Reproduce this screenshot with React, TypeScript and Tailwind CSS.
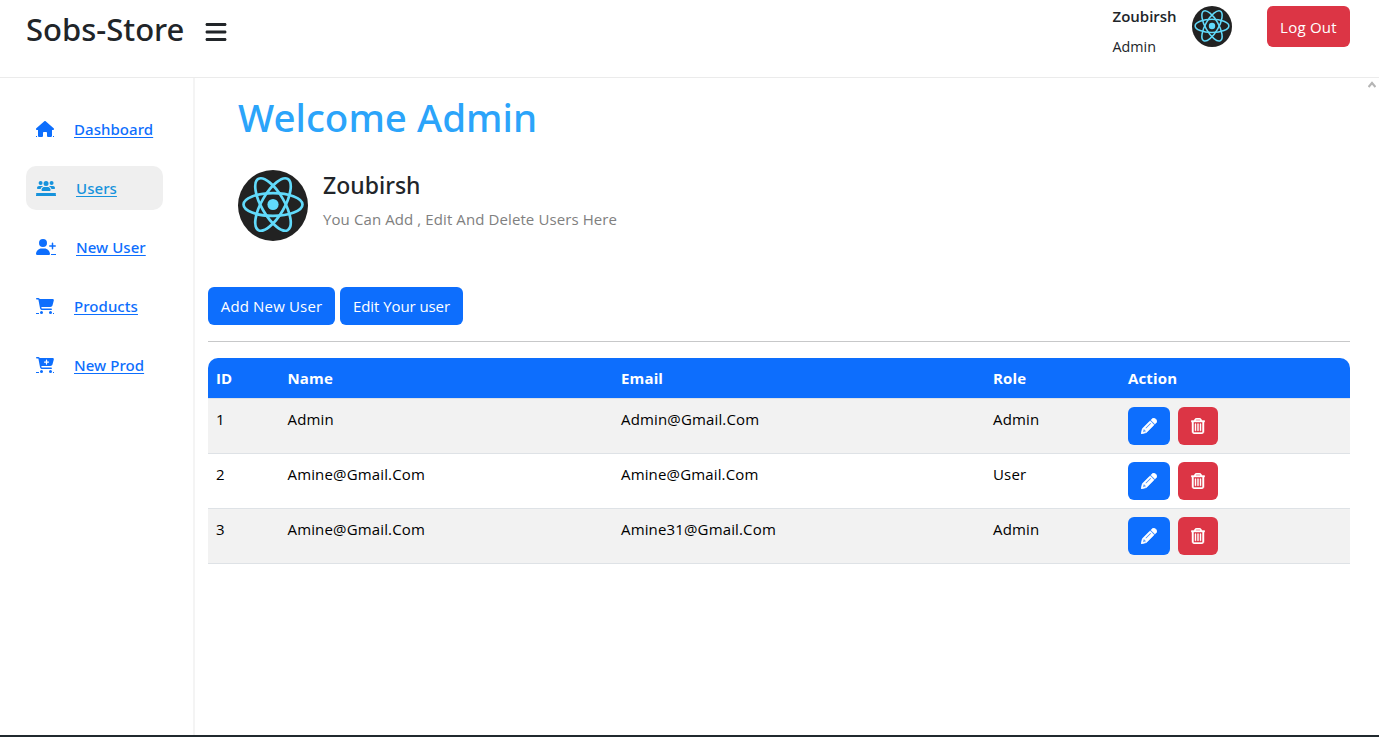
import type { ReactNode } from "react";
import type { IconType } from "react-icons";
import {
  FaBars,
  FaCartPlus,
  FaCartShopping,
  FaHouse,
  FaPencil,
  FaRegTrashCan,
  FaUserPlus,
  FaUsersLine,
} from "react-icons/fa6";

type NavItem = { label: string; icon: IconType; iconClass: string; ticks: string[]; active?: boolean };

const nav: NavItem[] = [
  { label: "Dashboard", icon: FaHouse, iconClass: "w-[18px]", ticks: ["left-0 w-px", "right-0 w-px"] },
  { label: "Users", icon: FaUsersLine, iconClass: "w-5", ticks: ["left-0 w-5"], active: true },
  { label: "New User", icon: FaUserPlus, iconClass: "w-5", ticks: ["right-0 w-[5px]"] },
  { label: "Products", icon: FaCartShopping, iconClass: "w-[18px]", ticks: ["left-0 w-[3px]", "right-0 w-px"] },
  { label: "New Prod", icon: FaCartPlus, iconClass: "w-[18px]", ticks: ["left-0 w-[3px]", "right-0 w-px"] },
];

const users = [
  { id: 1, name: "Admin", email: "Admin@Gmail.Com", role: "Admin" },
  { id: 2, name: "Amine@Gmail.Com", email: "Amine@Gmail.Com", role: "User" },
  { id: 3, name: "Amine@Gmail.Com", email: "Amine31@Gmail.Com", role: "Admin" },
];

function Avatar({ className }: { className: string }) {
  return (
    <svg viewBox="0 0 70 71" preserveAspectRatio="none" className={className}>
      <ellipse cx="35" cy="35.5" rx="35" ry="35.5" fill="#222222" />
      <g fill="none" stroke="#61dafb" strokeWidth="2.7">
        <ellipse cx="35" cy="34.5" rx="29.5" ry="11.4" />
        <ellipse cx="35" cy="34.5" rx="29.5" ry="11.4" transform="rotate(60 35 34.5)" />
        <ellipse cx="35" cy="34.5" rx="29.5" ry="11.4" transform="rotate(120 35 34.5)" />
      </g>
      <circle cx="35" cy="34.5" r="5.6" fill="#61dafb" />
    </svg>
  );
}

function Button({ children, className }: { children: ReactNode; className: string }) {
  return (
    <button className={`flex h-[38px] items-center justify-center rounded-md text-white ${className}`}>
      {children}
    </button>
  );
}

function Header() {
  return (
    <header className="flex h-[78px] shrink-0 items-start border-b border-[#ebebeb] pr-[29px] pl-[26px]">
      <h1 className="mt-[10px] w-[179px] font-['Noto_Sans',sans-serif] text-[31px] leading-[38px] font-medium whitespace-nowrap">
        Sobs-Store
      </h1>
      <FaBars className="mt-5 h-6 w-[22px]" />
      <div className="ml-auto w-[79.5px] text-[15px]">
        <div className="mt-1 leading-6 font-semibold">Zoubirsh</div>
        <div className="mt-[7px] text-[14.3px] leading-6">Admin</div>
      </div>
      <Avatar className="mt-[6px] h-[41px] w-10" />
      <button className="mt-[6px] ml-[35px] h-[41px] w-[83px] rounded-md bg-[#dc3545] pt-[2px] text-[15px] tracking-[0.25px] text-white">
        Log Out
      </button>
    </header>
  );
}

function Sidebar() {
  return (
    <aside className="flex w-[195px] shrink-0 flex-col gap-[15px] border-r-2 border-[#f4f4f4] pt-[29px] pr-[30px] pl-[26px]">
      {nav.map(({ label, icon: Icon, iconClass, ticks, active }) => (
        <a
          key={label}
          href="#"
          className={`flex h-11 w-[137px] items-center gap-5 rounded-[10px] pl-[10px] ${
            active ? "bg-[#efefef] text-[#1793dc]" : "text-[#0d6efd]"
          }`}
        >
          <span className="relative">
            <Icon className={`h-4 ${iconClass}`} />
            {ticks.map((t) => (
              <span key={t} className={`absolute bottom-0 h-px bg-current ${t}`} />
            ))}
          </span>
          <span className="font-['Noto_Sans',sans-serif] text-[15px] leading-6 font-medium tracking-[0.06px] underline decoration-1 underline-offset-[2px] [text-decoration-skip-ink:none]">
            {label}
          </span>
        </a>
      ))}
    </aside>
  );
}

function UsersTable() {
  return (
    <table className="w-full table-fixed border-separate border-spacing-0 text-left text-[15px] tracking-[0.15px] text-black">
      <colgroup>
        <col className="w-[71.5px]" />
        <col className="w-[333.5px]" />
        <col className="w-[372px]" />
        <col className="w-[135px]" />
        <col />
      </colgroup>
      <thead>
        <tr className="h-[41px] text-white *:border-b *:border-[#dee2e6] *:bg-[#0d6efd] *:px-2 *:font-bold">
          <th className="rounded-tl-[10px]">ID</th>
          <th>Name</th>
          <th>Email</th>
          <th>Role</th>
          <th className="rounded-tr-[10px]">Action</th>
        </tr>
      </thead>
      <tbody>
        {users.map((u) => (
          <tr key={u.id} className="h-[55px] align-top leading-6 odd:bg-[#f2f2f2] *:border-b *:border-[#dee2e6] *:px-2 *:pt-2">
            <td>{u.id}</td>
            <td>{u.name}</td>
            <td>{u.email}</td>
            <td>{u.role}</td>
            <td>
              <div className="flex gap-2">
                <Button className="w-[42px] bg-[#0d6efd]">
                  <FaPencil className="size-4" stroke="currentColor" strokeWidth="14" />
                </Button>
                <Button className="w-10 bg-[#dc3545]">
                  <FaRegTrashCan className="h-4 w-[14px]" stroke="currentColor" strokeWidth="14" />
                </Button>
              </div>
            </td>
          </tr>
        ))}
      </tbody>
    </table>
  );
}

export default function App() {
  return (
    <div className="flex h-[737px] w-[1379px] flex-col overflow-hidden border-b-2 border-[#20292e] bg-white font-['Open_Sans',sans-serif] text-[#212529]">
      <Header />
      <div className="relative flex min-h-0 flex-1">
        <Sidebar />
        <main className="flex-1 pr-[29px] pl-[13px]">
          <section className="pt-[15px] pl-[30px]">
            <h2 className="font-['Noto_Sans',sans-serif] text-[38.5px] leading-[48px] font-medium text-[#2ba4fa]">
              Welcome Admin
            </h2>
            <div className="mt-[29px] flex gap-[15px]">
              <Avatar className="h-[71px] w-[70px]" />
              <div>
                <h3 className="mt-px font-['Noto_Sans',sans-serif] text-[23px] leading-[29px] font-medium">Zoubirsh</h3>
                <p className="mt-[7px] text-[15px] leading-6 tracking-[0.1px] text-[#808080]">
                  You Can Add , Edit And Delete Users Here
                </p>
              </div>
            </div>
          </section>
          <div className="mt-[46px] flex gap-[5px] text-[15px]">
            <Button className="w-[127px] bg-[#0d6efd] pt-px tracking-[0.16px]">Add New User</Button>
            <Button className="w-[123px] bg-[#0d6efd] pt-px tracking-[-0.08px]">Edit Your user</Button>
          </div>
          <hr className="my-4 border-[#c7c8c9]" />
          <UsersTable />
        </main>
        <svg viewBox="0 0 8 7" className="absolute top-[3px] right-[3px] h-[7px] w-2" fill="none" stroke="#b5b5b5" strokeWidth="2.2">
          <path d="M0.5 6 L4 2 L7.5 6" />
        </svg>
      </div>
    </div>
  );
}
